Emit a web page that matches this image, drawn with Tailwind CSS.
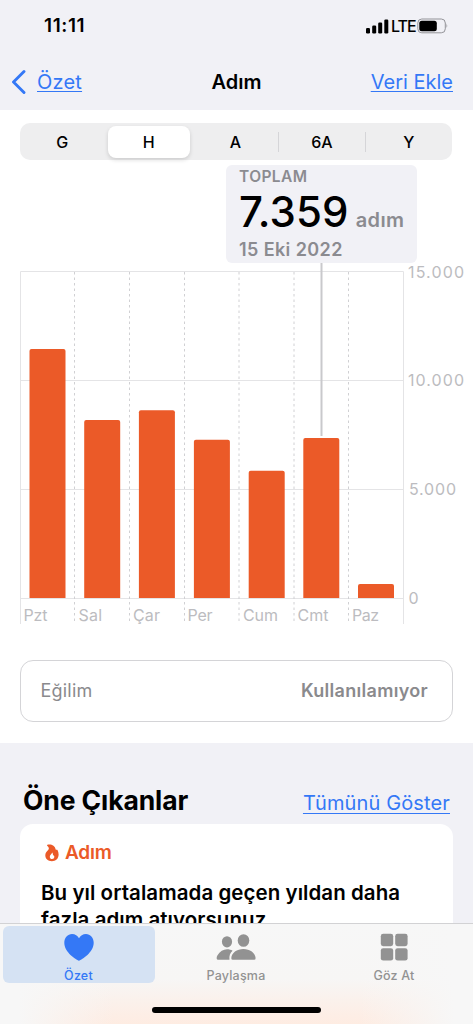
<!DOCTYPE html>
<html lang="tr">
<head>
<meta charset="utf-8">
<title>Adım</title>
<script src="https://cdn.jsdelivr.net/npm/@tailwindcss/browser@4"></script>
</head>
<body class="w-[473px] h-[1024px] overflow-hidden flex flex-col bg-[#f1f1f6] text-black font-['Inter','Liberation_Sans',sans-serif]">
<main class="h-[923px] shrink-0 overflow-hidden flex flex-col">
  <header class="h-[110px] shrink-0 bg-[#f1f1f6]">
    <div class="h-[52px] flex items-center justify-between pl-[44px] pr-[25px]">
      <span class="text-[19px] font-semibold leading-6 tracking-[0.6px]">11:11</span>
      <div class="flex items-center">
        <svg class="w-[23px] h-[16px]" viewBox="0 0 23 16"><rect x="0" y="10" width="4" height="5.500" rx="1.200"/><rect x="6.200" y="7.500" width="4" height="8" rx="1.200"/><rect x="12.200" y="4.500" width="4" height="11" rx="1.200"/><rect x="18.300" y="1.500" width="4" height="14" rx="1.200"/></svg>
        <span class="w-[26px] ml-[2px] text-[16px] font-medium leading-5 tracking-[-1px]">LTE</span>
        <svg class="w-[31px] h-[16px]" viewBox="0 0 31 16"><rect x=".8" y="1" width="27.500" height="13.800" rx="4" fill="none" stroke="#939398"/><rect x="2.300" y="2.700" width="17.500" height="10.500" rx="2.500"/><path d="M29.500 5.500q1.500 2.300 0 4.600z" fill="#939398"/></svg>
      </div>
    </div>
    <div class="h-[58px] pl-[11px] pr-[20px] pt-[17px] flex justify-between text-[20px] leading-[27px]">
      <div class="w-[120px] flex text-[#3478f6]">
        <svg class="w-[15px] h-[26px]" viewBox="0 0 15 26"><path d="M13 2.500 2.500 13 13 23.500" fill="none" stroke="currentColor" stroke-width="2.900" stroke-linecap="round" stroke-linejoin="round"/></svg>
        <span class="ml-[11px] underline underline-offset-[2px] decoration-1 tracking-[0.2px]">Özet</span>
      </div>
      <h1 class="ml-[9px] text-center font-semibold tracking-[0px]">Adım</h1>
      <span class="w-[120px] text-right text-[#3478f6] underline underline-offset-[2px] decoration-1 tracking-[0px] whitespace-nowrap">Veri Ekle</span>
    </div>
  </header>

  <section class="h-[633px] shrink-0 bg-white pt-[13px] flex flex-col">
    <div class="mx-[20px] h-[37px] w-[432px] shrink-0 rounded-[10px] bg-[#eeeeef] grid grid-cols-5 items-center text-center text-[16px] font-medium leading-5">
      <span class="pr-[2px]">G</span>
      <span class="h-[32px] ml-[2px] mr-[3px] pr-[1px] leading-[32px] rounded-[8px] bg-white shadow-[0_2px_4px_rgba(0,0,0,0.14)]">H</span>
      <span class="border-r border-[#d5d5d8]">A</span>
      <span class="border-r border-[#d5d5d8]">6A</span>
      <span>Y</span>
    </div>

    <div class="relative h-[500px] shrink-0">
      <svg class="w-[473px] h-[499px]" viewBox="0 160 473 499">
        <g fill="none" stroke="#e4e4e6">
          <path d="M20.500 624V271.500H403.500V624M20.500 380.500H403.500M20.500 489.500H403.500M20.500 598.500H403.500"/>
          <path stroke="#d0d0d3" stroke-dasharray="2.500 3" d="M74.500 272V624M129.500 272V624M184.500 272V624M239 272V624M294 272V624M348.500 272V624"/>
        </g>
        <path d="M321.500 262V436" stroke="#c9c9cc" stroke-width="2"/>
        <g fill="#eb5a28">
          <path d="M29.500 598V351q0-2 2-2h32q2 0 2 2V598z"/>
          <path d="M84.200 598V422q0-2 2-2h32q2 0 2 2V598z"/>
          <path d="M138.900 598V412.200q0-2 2-2h32q2 0 2 2V598z"/>
          <path d="M193.900 598V441.800q0-2 2-2h32q2 0 2 2V598z"/>
          <path d="M248.700 598V472.800q0-2 2-2h32q2 0 2 2V598z"/>
          <path d="M303.300 598V440q0-2 2-2h32q2 0 2 2V598z"/>
          <path d="M358 598V586q0-2 2-2h32q2 0 2 2V598z"/>
        </g>
        <g fill="#bcbcc0" font-size="16">
          <text x="408" y="277.500" textLength="56">15.000</text>
          <text x="408" y="386" textLength="56">10.000</text>
          <text x="409" y="495" textLength="47">5.000</text>
          <text x="408.500" y="604">0</text>
          <text x="23.500" y="620.500" textLength="24">Pzt</text>
          <text x="78.500" y="620.500" textLength="23.500">Sal</text>
          <text x="133" y="620.500" textLength="27">Çar</text>
          <text x="187.500" y="620.500" textLength="25">Per</text>
          <text x="243" y="620.500" textLength="35">Cum</text>
          <text x="297.500" y="620.500" textLength="31">Cmt</text>
          <text x="352" y="620.500" textLength="27">Paz</text>
        </g>
      </svg>
      <div class="absolute left-[226px] top-[5px] w-[191px] h-[98px] rounded-[6px] bg-[#f1f1f6] pl-[13px] flex flex-col font-semibold text-[#8b8b90] whitespace-nowrap">
        <span class="mt-[1px] h-[20px] text-[15.500px] leading-[22px] tracking-[0.4px]">TOPLAM</span>
        <div class="h-[52px] flex items-baseline leading-[52px]">
          <span class="text-[42px] font-medium text-black tracking-[0.1px]">7.359</span>
          <span class="ml-[7px] text-[20px] tracking-[0.4px]">adım</span>
        </div>
        <span class="h-[22px] text-[18px] leading-[23px] tracking-[0.4px]">15 Eki 2022</span>
      </div>
    </div>

    <div class="mx-[20px] w-[433px] h-[62px] shrink-0 rounded-[13px] border-[1.500px] border-[#d4d4d7] flex items-center justify-between pl-[19.500px] pr-[24px] text-[18px] leading-6 text-[#8a8a8d]">
      <span class="tracking-[0.2px]">Eğilim</span>
      <span class="font-semibold tracking-[0.3px]">Kullanılamıyor</span>
    </div>
  </section>

  <section class="shrink-0 flex flex-col">
    <div class="h-[81px] pl-[23px] pr-[23px] flex items-baseline justify-between leading-[32px] pt-[41px]">
      <h2 class="text-[26.500px] font-bold tracking-[-0.1px]">Öne Çıkanlar</h2>
      <span class="text-[20px] text-[#3478f6] underline underline-offset-[3px] decoration-1 tracking-[0.13px]">Tümünü Göster</span>
    </div>
    <article class="mx-[20px] w-[433px] h-[150px] rounded-[13px] bg-white pl-[21px] pt-[16px]">
      <div class="flex items-center text-[#eb5a28]">
        <svg class="ml-[4px] w-[14px] h-[18px]" viewBox="0 0 14 18"><path fill="currentColor" fill-rule="evenodd" d="M2.400.7C6.500-.2 10 2 10.600 5.200c.1.600.5.700 1 .5.400-.1.700 0 .9.400C13.300 7.700 13.700 9.200 13.600 11 13.400 14.800 10.600 17.200 6.900 17.200 3 17.200.3 14.900.3 11.300.3 8.900 1.500 7.600 2.700 6.500 4.200 5.200 4.400 3.500 2.300 1.900c-.4-.3-.3-1 .1-1.200zM7.200 8.600C6.900 10.200 4.800 10.900 4.800 12.700c0 1.400 1 2.300 2.300 2.300s2.200-.8 2.200-2.200c0-.7-.2-1.200-.5-1.600-.2.200-.5.300-.7 0C7.800 10.400 7.900 9.300 7.200 8.600z"/></svg>
        <span class="ml-[6px] text-[19px] font-semibold leading-[26px] tracking-[-0.2px]">Adım</span>
      </div>
      <p class="mt-[13px] text-[20.500px] font-semibold leading-[27px] tracking-[0.06px] whitespace-nowrap">Bu yıl ortalamada geçen yıldan daha<br>fazla adım atıyorsunuz.</p>
    </article>
  </section>
</main>

<nav class="h-[101px] shrink-0 border-t border-[#d2d2d4] bg-[#f7f7f7] bg-[linear-gradient(90deg,#f7f7f7_4%,#f7f7f700_24%,#f7f7f700_76%,#f7f7f7_96%),linear-gradient(180deg,#f7f7f7_0%,#f7f6f5_55%,#fcefe8_85%,#feece2_100%)] pt-[2px] flex flex-col items-start">
  <div class="flex w-full h-[57px] shrink-0 text-[12.500px] font-medium leading-4 text-[#929292]">
    <div class="ml-[3px] w-[152px] h-[57px] pr-[1px] rounded-[6px] bg-[#d5e2f3] flex flex-col items-center text-[#3478f6]">
      <svg class="mt-[7px] shrink-0 w-[30px] h-[28px]" viewBox="0 0 30 28"><path fill="currentColor" d="M15 27.800C12 26.500.3 19.500.3 9.800.3 4.500 3.800 1 8 1c3.200 0 5.600 1.700 7 4.300C16.400 2.700 18.800 1 22 1c4.200 0 7.700 3.500 7.700 8.800 0 9.700-11.700 16.700-14.700 18z"/></svg>
      <span class="mt-[7px] tracking-[0.2px]">Özet</span>
    </div>
    <div class="ml-[2px] w-[158px] flex flex-col items-center">
      <svg class="mt-[7px] shrink-0 w-[40px] h-[28px]" viewBox="0 0 40 28" fill="currentColor"><ellipse cx="11" cy="8.800" rx="5.100" ry="5.600"/><path d="M.7 25.800q-.3-1.700.8-3.600C3.700 18.200 7.500 16.200 11 16.200c2.200 0 4 .5 5.600 1.500-2.400 2-3.700 4.900-3.100 9.100H2Q.9 26.800.7 25.800z"/><ellipse cx="27.500" cy="7.500" rx="5.800" ry="6.300"/><path d="M15.300 25.300C15.500 19.800 21 16 27.400 16s12 3.800 12.200 9.300q0 1.500-1.500 1.500H16.800q-1.500 0-1.500-1.500z"/></svg>
      <span class="mt-[7px] tracking-[0.2px]">Paylaşma</span>
    </div>
    <div class="w-[158px] flex flex-col items-center">
      <svg class="mt-[7px] shrink-0 w-[28px] h-[28px]" viewBox="0 0 28 28" fill="currentColor"><rect x=".8" y=".8" width="12.400" height="12.400" rx="2.400"/><rect x="15.200" y=".8" width="12.400" height="12.400" rx="2.400"/><rect x=".8" y="15.200" width="12.400" height="12.400" rx="2.400"/><rect x="15.200" y="15.200" width="12.400" height="12.400" rx="2.400"/></svg>
      <span class="mt-[7px] tracking-[0.2px]">Göz At</span>
    </div>
  </div>
  <div class="mt-[24px] ml-[152px] w-[169px] h-[6px] rounded-full bg-black"></div>
</nav>
</body>
</html>
